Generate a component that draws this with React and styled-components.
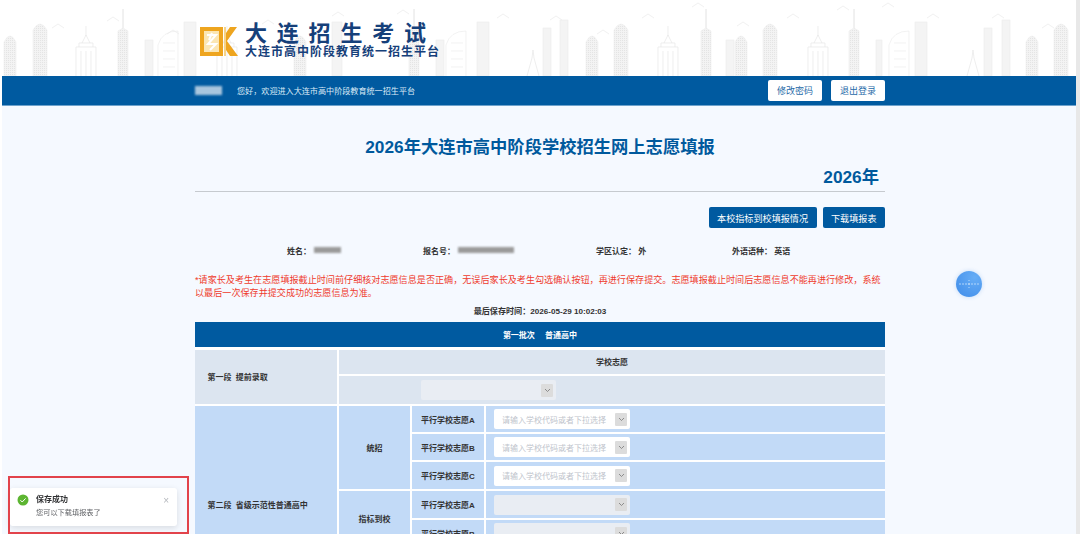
import React from "react";
import styled, { createGlobalStyle } from "styled-components";

const GlobalStyle = createGlobalStyle`
  html, body {
    margin: 0;
    height: 534px;
    overflow: hidden;
    background: #ffffff;
  }
  body {
    font-family: "Liberation Sans", "Noto Sans CJK SC", sans-serif;
  }
  * {
    box-sizing: border-box;
  }
`;

const Page = styled.div`
  display: flex;
  height: 534px;
  padding-left: 2px;
`;

const Main = styled.div`
  flex: 1;
  min-width: 0;
  background: #f5f9ff;
  overflow: hidden;
`;

const Scrollbar = styled.div`
  width: 4px;
  background: #e8e8e8;
`;

const Banner = styled.header`
  height: 76px;
  background: #ffffff;
  position: relative;
  overflow: hidden;
`;

const Skyline = styled.svg`
  position: absolute;
  left: 0;
  bottom: 0;
`;

const Wrap = styled.div`
  width: 690px;
  margin-left: 193px;
`;

const LogoRow = styled(Wrap)`
  position: relative;
  display: flex;
  align-items: center;
  gap: 7px;
  height: 76px;
  padding: 4px 0 0 5px;
`;

const LogoMark = styled.svg`
  margin-top: 3px;
  flex-shrink: 0;
`;

const LogoText = styled.div`
  display: flex;
  flex-direction: column;
`;

const LogoTitle = styled.div`
  font-size: 22px;
  line-height: 25px;
  font-weight: 700;
  letter-spacing: 9.8px;
  color: #16407a;
  white-space: nowrap;
`;

const LogoSub = styled.div`
  font-size: 12px;
  line-height: 13px;
  font-weight: 700;
  letter-spacing: 1px;
  color: #16407a;
  white-space: nowrap;
`;

const TopBar = styled.div`
  height: 30px;
  background: #005aa0;
  border-bottom: 1px solid #6ea2cc;
`;

const TopBarInner = styled(Wrap)`
  display: flex;
  align-items: center;
  height: 100%;
`;

const Blur = styled.span`
  display: inline-block;
  width: ${(p) => p.$w}px;
  height: ${(p) => p.$h || 6}px;
  background: ${(p) => p.$c || "#9a9a9a"};
  filter: blur(1px);
`;

const Greeting = styled.span`
  margin-left: 15px;
  font-size: 8.1px;
  color: #dcebf7;
`;

const TopActions = styled.div`
  margin-left: auto;
  display: flex;
  gap: 9px;
`;

const TopButton = styled.button`
  width: 54px;
  height: 21px;
  padding: 0;
  border: 0;
  border-radius: 2px;
  background: #ffffff;
  color: #1f6aa8;
  font: 9px "Liberation Sans", "Noto Sans CJK SC", sans-serif;
`;

const Content = styled(Wrap)`
  display: flex;
  flex-direction: column;
  padding-top: 30px;
`;

const Title = styled.h1`
  margin: 0;
  font-size: 17.3px;
  line-height: 22px;
  font-weight: 700;
  text-align: center;
  color: #00599d;
`;

const Year = styled.div`
  margin-top: 7px;
  padding-right: 6px;
  font-size: 17.3px;
  line-height: 24px;
  font-weight: 700;
  text-align: right;
  color: #00599d;
`;

const Rule = styled.div`
  height: 1px;
  margin-top: 2px;
  background: #c6cacf;
`;

const Actions = styled.div`
  display: flex;
  justify-content: flex-end;
  gap: 6px;
  margin-top: 15px;
`;

const ActionButton = styled.button`
  height: 21px;
  padding: 0 8.5px;
  border: 0;
  border-radius: 2px;
  background: #005aa0;
  color: #ffffff;
  font: 9.1px "Liberation Sans", "Noto Sans CJK SC", sans-serif;
`;

const InfoRow = styled.div`
  display: grid;
  grid-template-columns: 136px 173px 136px 1fr;
  margin-top: 16px;
  padding-left: 92px;
  height: 12px;
  align-items: center;
`;

const InfoItem = styled.div`
  display: flex;
  align-items: center;
  gap: 3px;
  font-size: 8px;
  font-weight: 700;
  color: #333333;
  white-space: pre;
`;

const Notice = styled.p`
  margin: 18px 0 0;
  font-size: 9.1px;
  line-height: 12.5px;
  color: #ef3b2d;
`;

const SavedAt = styled.div`
  margin-top: 7px;
  height: 12px;
  font-size: 8.1px;
  line-height: 12px;
  font-weight: 700;
  text-align: center;
  color: #333333;
`;

const Table = styled.table`
  width: 690px;
  margin-top: 4px;
  border-collapse: collapse;
  table-layout: fixed;
  font-size: 8px;
  font-weight: 700;
  color: #333333;
`;

const HeadCell = styled.th`
  height: 26px;
  padding: 0;
  background: #005aa0;
  color: #ffffff;
  font-size: 8px;
  border-bottom: 3px solid #ffffff;
  word-spacing: 8px;
`;

const Cell = styled.td`
  height: ${(p) => p.$h || 28}px;
  padding: ${(p) => (p.$left ? "0 0 0 12.5px" : "0")};
  background: ${(p) => (p.$tone === "grey" ? "#dce5f0" : "#c2daf7")};
  border: 2px solid #ffffff;
  border-left: ${(p) => (p.$first ? 0 : "2px solid #ffffff")};
  border-right: ${(p) => (p.$last ? 0 : "2px solid #ffffff")};
  text-align: ${(p) => (p.$left ? "left" : "center")};
  vertical-align: middle;
  white-space: nowrap;
  word-spacing: 2px;
`;

const SelectBox = styled.div`
  display: flex;
  align-items: center;
  justify-content: space-between;
  width: ${(p) => p.$w}px;
  height: 20px;
  margin-left: ${(p) => p.$m}px;
  padding: 0 3px 0 8px;
  border-radius: 2px;
  background: ${(p) => (p.$disabled ? "#e9edf3" : "#ffffff")};
  color: #c0c4cc;
  font-size: 8px;
  font-weight: 400;
`;

const Arrow = styled.span`
  display: flex;
  align-items: center;
  justify-content: center;
  width: 12px;
  height: 13px;
  background: #dcdcdc;
  border-radius: 1px;
`;

const Floating = styled.div`
  position: fixed;
  left: 956px;
  top: 271px;
  width: 26px;
  height: 26px;
  border-radius: 50%;
  background: radial-gradient(circle at 72% 25%, #66adf6, #3f8ce9);
  box-shadow: 0 0 4px rgba(190, 215, 245, 0.9);
`;

const Toast = styled.div`
  position: fixed;
  left: 10px;
  top: 488px;
  display: flex;
  gap: 7px;
  width: 167px;
  height: 38px;
  padding: 6px 7px;
  background: #ffffff;
  border-radius: 3px;
  box-shadow: 0 2px 6px rgba(0, 0, 0, 0.12);
`;

const ToastBody = styled.div`
  display: flex;
  flex-direction: column;
  gap: 2px;
`;

const ToastTitle = styled.div`
  font-size: 8px;
  line-height: 11px;
  font-weight: 700;
  color: #303133;
`;

const ToastText = styled.div`
  font-size: 7.2px;
  line-height: 11px;
  color: #606266;
`;

const ToastClose = styled.span`
  position: absolute;
  right: 8px;
  top: 8px;
  font-size: 10px;
  line-height: 10px;
  color: #b5b8bd;
`;

const Annotation = styled.div`
  position: fixed;
  left: 8px;
  top: 476px;
  width: 181px;
  height: 58px;
  border: 2px solid #e2434b;
  pointer-events: none;
`;

const buildings = [
  ["hatch", 2, 34, 12],
  ["hatch", 31, 22, 14],
  ["castle", 74, 26, 20],
  ["needle", 116, 9, 10],
  ["slab", 143, 40, 8],
  ["outline", 156, 31, 20],
  ["slab", 182, 22, 12],
  ["hatch", 292, 34, 12],
  ["castle", 215, 26, 20],
  ["slab", 330, 22, 10],
  ["needle", 407, 9, 10],
  ["slab", 434, 40, 8],
  ["outline", 444, 31, 20],
  ["slab", 475, 22, 12],
  ["spire", 525, 50, 12],
  ["slab", 541, 28, 8],
  ["slab", 558, 20, 8],
  ["hatch", 584, 34, 12],
  ["hatch", 612, 22, 14],
  ["castle", 656, 26, 20],
  ["needle", 699, 9, 10],
  ["slab", 724, 40, 8],
  ["hatch", 733, 34, 12],
  ["hatch", 761, 22, 14],
  ["castle", 806, 26, 20],
  ["needle", 847, 9, 10],
  ["slab", 874, 40, 6],
  ["outline", 887, 31, 20],
  ["slab", 913, 22, 12],
  ["spire", 965, 50, 12],
  ["slab", 982, 28, 8],
  ["slab", 1000, 20, 8],
  ["hatch", 1024, 34, 12],
  ["hatch", 1052, 22, 14],
];

const birds = [
  [50, 24], [105, 17], [165, 30], [260, 20], [330, 12], [395, 10], [495, 14],
  [548, 16], [595, 30], [640, 14], [690, 3], [735, 22], [785, 14], [835, 6],
  [880, 3], [925, 14], [990, 14], [1040, 24],
];

// one building of the city line drawing, x/top/width given per building
function Building({ kind, x, top, w }) {
  const bottom = 76;
  const h = bottom - top;
  if (kind === "hatch") {
    return (
      <path
        d={`M${x} ${bottom}V${top + 8}Q${x + w / 2} ${top - 4} ${x + w} ${top + 8}V${bottom}Z`}
        fill="url(#hatch)"
        stroke="#eeeeee"
        strokeWidth="0.6"
      />
    );
  }
  if (kind === "needle") {
    const body = top + 19;
    return (
      <g>
        <path d={`M${x + w / 2} ${top}V${body}`} stroke="#e2e2e2" strokeWidth="1" />
        <path
          d={`M${x} ${bottom}V${body + 3}L${x + w / 2} ${body}L${x + w} ${body + 3}V${bottom}Z`}
          fill="url(#hatch)"
          stroke="#ececec"
          strokeWidth="0.6"
        />
      </g>
    );
  }
  if (kind === "castle") {
    return (
      <g fill="none" stroke="#e6e6e6" strokeWidth="0.7">
        <path d={`M${x + w / 2} ${top}V${top + 10}`} />
        <path d={`M${x + 6} ${top + 17}L${x + w / 2} ${top + 9}L${x + w - 6} ${top + 17}`} />
        <path d={`M${x} ${bottom}V${top + 21}H${x + w}V${bottom}M${x + 3} ${top + 21}V${top + 17}H${x + w - 3}V${top + 21}`} />
        <path d={`M${x + 5} ${top + 25}V${bottom}M${x + 10} ${top + 25}V${bottom}M${x + 15} ${top + 25}V${bottom}`} />
      </g>
    );
  }
  if (kind === "outline") {
    return (
      <g fill="none" stroke="#ececec" strokeWidth="0.7">
        <path d={`M${x} ${bottom}V${top + 14}Q${x + 4} ${top} ${x + w} ${top}V${bottom}`} />
        <path d={`M${x + 5} ${top + 12}H${x + w - 3}M${x + 5} ${top + 20}H${x + w - 3}M${x + 5} ${top + 28}H${x + w - 3}M${x + 5} ${top + 36}H${x + w - 3}`} />
      </g>
    );
  }
  if (kind === "spire") {
    return (
      <path
        d={`M${x} ${bottom}L${x + w / 2 - 1} ${top + 8}L${x + w / 2} ${top}L${x + w / 2 + 1} ${top + 8}L${x + w} ${bottom}`}
        fill="none"
        stroke="#e6e6e6"
        strokeWidth="0.7"
      />
    );
  }
  return <rect x={x} y={top} width={w} height={h} fill="#f4f4f4" stroke="#ececec" strokeWidth="0.6" />;
}

function Logo() {
  return (
    <LogoMark width="38" height="29" viewBox="0 0 38 29">
      <path d="M0 0h23v29H0z" fill="#eea51f" />
      <path d="M4 4h15v21H4z" fill="#fbe6b4" />
      <path d="M7 8h9l-8 9h8l-6 6M12 6l-3 7" fill="none" stroke="#ffffff" strokeWidth="2" />
      <path d="M24 0h2v29h-2z" fill="#f7d488" />
      <path d="M27 14L37 0h-7l-4 6v17l4 6h8z" fill="#eea51f" />
    </LogoMark>
  );
}

function Chevron() {
  return (
    <svg width="7" height="5" viewBox="0 0 7 5">
      <path d="M1 1l2.5 2.5L6 1" fill="none" stroke="#777777" strokeWidth="0.8" />
    </svg>
  );
}

function Select({ placeholder, disabled, w = 136, m = 8 }) {
  return (
    <SelectBox $w={w} $m={m} $disabled={disabled}>
      <span>{placeholder}</span>
      <Arrow>
        <Chevron />
      </Arrow>
    </SelectBox>
  );
}

const hint = "请输入学校代码或者下拉选择";

function App() {
  return (
    <Page>
      <GlobalStyle />
      <Main>
        <Banner>
          <Skyline width="1074" height="76" viewBox="0 0 1074 76">
            <defs>
              <pattern id="hatch" width="2" height="2" patternUnits="userSpaceOnUse">
                <rect width="2" height="2" fill="#f3f3f3" />
                <path d="M0 0h1v1H0z" fill="#e4e4e4" />
              </pattern>
            </defs>
            {buildings.map(([kind, x, top, w]) => (
              <Building key={`${kind}-${x}`} kind={kind} x={x} top={top} w={w} />
            ))}
            {birds.map(([x, y]) => (
              <path
                key={x}
                d={`M${x} ${y + 4}l6-4 6 4`}
                fill="none"
                stroke="#ebebeb"
                strokeWidth="0.7"
              />
            ))}
          </Skyline>
          <LogoRow>
            <Logo />
            <LogoText>
              <LogoTitle>大连招生考试</LogoTitle>
              <LogoSub>大连市高中阶段教育统一招生平台</LogoSub>
            </LogoText>
          </LogoRow>
        </Banner>
        <TopBar>
          <TopBarInner>
            <Blur $w={27} $h={9} $c="#a9c6de" />
            <Greeting>您好，欢迎进入大连市高中阶段教育统一招生平台</Greeting>
            <TopActions>
              <TopButton>修改密码</TopButton>
              <TopButton>退出登录</TopButton>
            </TopActions>
          </TopBarInner>
        </TopBar>
        <Content>
          <Title>2026年大连市高中阶段学校招生网上志愿填报</Title>
          <Year>2026年</Year>
          <Rule />
          <Actions>
            <ActionButton>本校指标到校填报情况</ActionButton>
            <ActionButton>下载填报表</ActionButton>
          </Actions>
          <InfoRow>
            <InfoItem>
              姓名：
              <Blur $w={27} />
            </InfoItem>
            <InfoItem>
              报名号：
              <Blur $w={56} />
            </InfoItem>
            <InfoItem>学区认定： 外</InfoItem>
            <InfoItem>外语语种： 英语</InfoItem>
          </InfoRow>
          <Notice>
            *请家长及考生在志愿填报截止时间前仔细核对志愿信息是否正确，无误后家长及考生勾选确认按钮，再进行保存提交。志愿填报截止时间后志愿信息不能再进行修改，系统以最后一次保存并提交成功的志愿信息为准。
          </Notice>
          <SavedAt>最后保存时间：2026-05-29 10:02:03</SavedAt>
          <Table>
            <colgroup>
              <col style={{ width: 143 }} />
              <col style={{ width: 73 }} />
              <col style={{ width: 74 }} />
              <col />
            </colgroup>
            <thead>
              <tr>
                <HeadCell colSpan={4}>第一批次 普通高中</HeadCell>
              </tr>
            </thead>
            <tbody>
              <tr>
                <Cell $tone="grey" $first $left rowSpan={2}>
                  第一段 提前录取
                </Cell>
                <Cell $tone="grey" $last colSpan={3} $h={27}>
                  学校志愿
                </Cell>
              </tr>
              <tr>
                <Cell $tone="grey" $last colSpan={3} $h={30}>
                  <Select disabled w={135} m={82} />
                </Cell>
              </tr>
              <tr>
                <Cell $first $left rowSpan={7}>
                  第二段 省级示范性普通高中
                </Cell>
                <Cell rowSpan={3}>统招</Cell>
                <Cell>平行学校志愿A</Cell>
                <Cell $last>
                  <Select placeholder={hint} />
                </Cell>
              </tr>
              <tr>
                <Cell>平行学校志愿B</Cell>
                <Cell $last>
                  <Select placeholder={hint} />
                </Cell>
              </tr>
              <tr>
                <Cell $h={29}>平行学校志愿C</Cell>
                <Cell $last>
                  <Select placeholder={hint} />
                </Cell>
              </tr>
              <tr>
                <Cell rowSpan={2}>指标到校</Cell>
                <Cell $h={29}>平行学校志愿A</Cell>
                <Cell $last>
                  <Select disabled />
                </Cell>
              </tr>
              <tr>
                <Cell>平行学校志愿B</Cell>
                <Cell $last>
                  <Select disabled />
                </Cell>
              </tr>
              {/* rows below the fold, only there so the 第二段 cell centres as in the page */}
              <tr>
                <Cell rowSpan={2} />
                <Cell />
                <Cell $last />
              </tr>
              <tr>
                <Cell />
                <Cell $last />
              </tr>
            </tbody>
          </Table>
        </Content>
      </Main>
      <Scrollbar />
      <Floating>
        <svg width="26" height="26" viewBox="0 0 26 26">
          <path d="M3 13h8M15 13h8" stroke="#d8ecff" strokeWidth="0.7" strokeDasharray="2 1" />
          <circle cx="13" cy="13" r="0.8" fill="#ffffff" />
          <circle cx="13" cy="16.5" r="0.5" fill="#d8ecff" />
          <circle cx="13" cy="9.5" r="0.5" fill="#d8ecff" />
        </svg>
      </Floating>
      <Toast>
        <svg width="12" height="12" viewBox="0 0 12 12" style={{ flexShrink: 0 }}>
          <circle cx="6" cy="6" r="5.5" fill="#5cb531" />
          <path d="M3.4 6.2l1.8 1.8 3.4-3.6" fill="none" stroke="#ffffff" strokeWidth="1" />
        </svg>
        <ToastBody>
          <ToastTitle>保存成功</ToastTitle>
          <ToastText>您可以下载填报表了</ToastText>
        </ToastBody>
        <ToastClose>×</ToastClose>
      </Toast>
      <Annotation />
    </Page>
  );
}

export default App;
